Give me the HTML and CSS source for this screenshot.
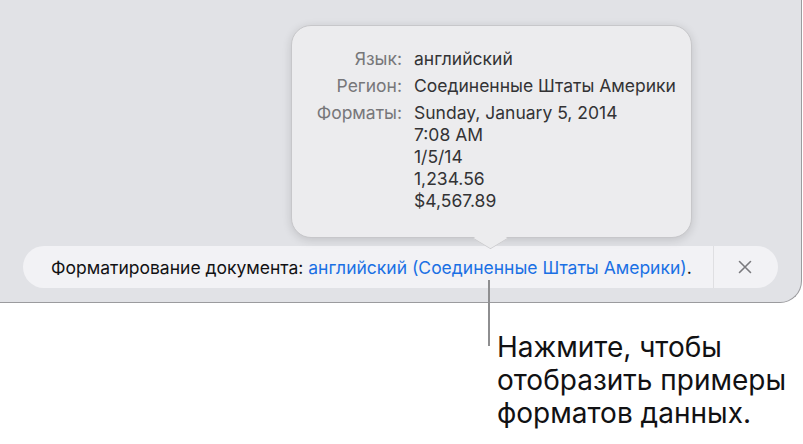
FILE: index.html
```html
<!DOCTYPE html>
<html lang="ru">
<head>
<meta charset="utf-8">
<link rel="stylesheet" href="styles.css">
</head>
<body>
<div class="window">
  <div class="popover">
    <div class="row"><span class="lbl">Язык:</span><span class="val">английский</span></div>
    <div class="row"><span class="lbl">Регион:</span><span class="val">Соединенные Штаты Америки</span></div>
    <div class="row"><span class="lbl">Форматы:</span><span class="val">Sunday, January 5, 2014<br>7:08 AM<br>1/5/14<br>1,234.56<br>$4,567.89</span></div>
    <div class="arrow"></div>
  </div>
  <div class="bar">
    <div class="msg">Форматирование документа: <span class="link">английский (Соединенные Штаты Америки)</span>.</div>
    <div class="close">
      <svg width="14" height="14" viewBox="0 0 14 14"><path d="M1.5 1.5 L12.5 12.5 M12.5 1.5 L1.5 12.5" stroke="#7a7a7e" stroke-width="1.6" stroke-linecap="round" fill="none"/></svg>
    </div>
  </div>
</div>
<div class="callout-line"></div>
<div class="callout">Нажмите, чтобы<br>отобразить примеры<br>форматов данных.</div>
</body>
</html>
```
FILE: styles.css
```css
html, body { margin: 0; padding: 0; background: #fff; }
body {
  width: 803px; height: 444px; overflow: hidden; position: relative;
  font-family: "Inter", "Roboto", sans-serif;
}
.window {
  position: relative;
  height: 303px;
  width: 802px;
  box-sizing: border-box;
  background: #e1e2e6;
  border-bottom: 1.5px solid #9b9b9e;
  border-right: 1.5px solid #9b9b9e;
  border-bottom-right-radius: 22px;
  padding-top: 246px;
  padding-left: 23px;
}
.popover {
  position: absolute;
  left: 291px; top: 25px;
  width: 401px; height: 213px;
  box-sizing: border-box;
  background: #ececee;
  border: 1px solid #c7c7ca;
  border-radius: 20px;
  box-shadow: 0 2px 10px rgba(0,0,0,0.14);
  padding: 22px 0 0 0;
  font-size: 17.5px;
  color: #3b3b3d;
  z-index: 2;
}
.row { display: flex; line-height: 22px; margin-bottom: 5px; }
.lbl { width: 110px; text-align: right; color: #77777a; box-sizing: border-box; margin-right: 12px; }
.val { color: #333335; }
.arrow {
  position: absolute;
  left: 186px; bottom: -14px;
  width: 24px; height: 24px;
  background: #ececee;
  transform: scaleY(0.6) rotate(45deg);
  border-right: 1px solid #c7c7ca;
  border-bottom: 1px solid #c7c7ca;
}
.bar {
  display: flex;
  align-items: stretch;
  width: 755px; height: 42px;
  background: #f2f2f5;
  border-radius: 21px;
  font-size: 17.5px;
}
.msg {
  flex: 1;
  display: flex; align-items: center;
  padding-left: 28px;
  color: #111113;
  white-space: pre;
}
.link { color: #1a70e4; }
.close {
  width: 62px;
  border-left: 1px solid #dfdfe2;
  display: flex; align-items: center; justify-content: center;
  padding-right: 2px;
}
.callout-line {
  position: absolute;
  left: 488px; top: 280px;
  width: 2px; height: 66px;
  background: #8e8e90;
  z-index: 3;
}
.callout {
  padding: 28px 0 0 497px;
  font-size: 28px;
  line-height: 33px;
  color: #111113;
}
```
